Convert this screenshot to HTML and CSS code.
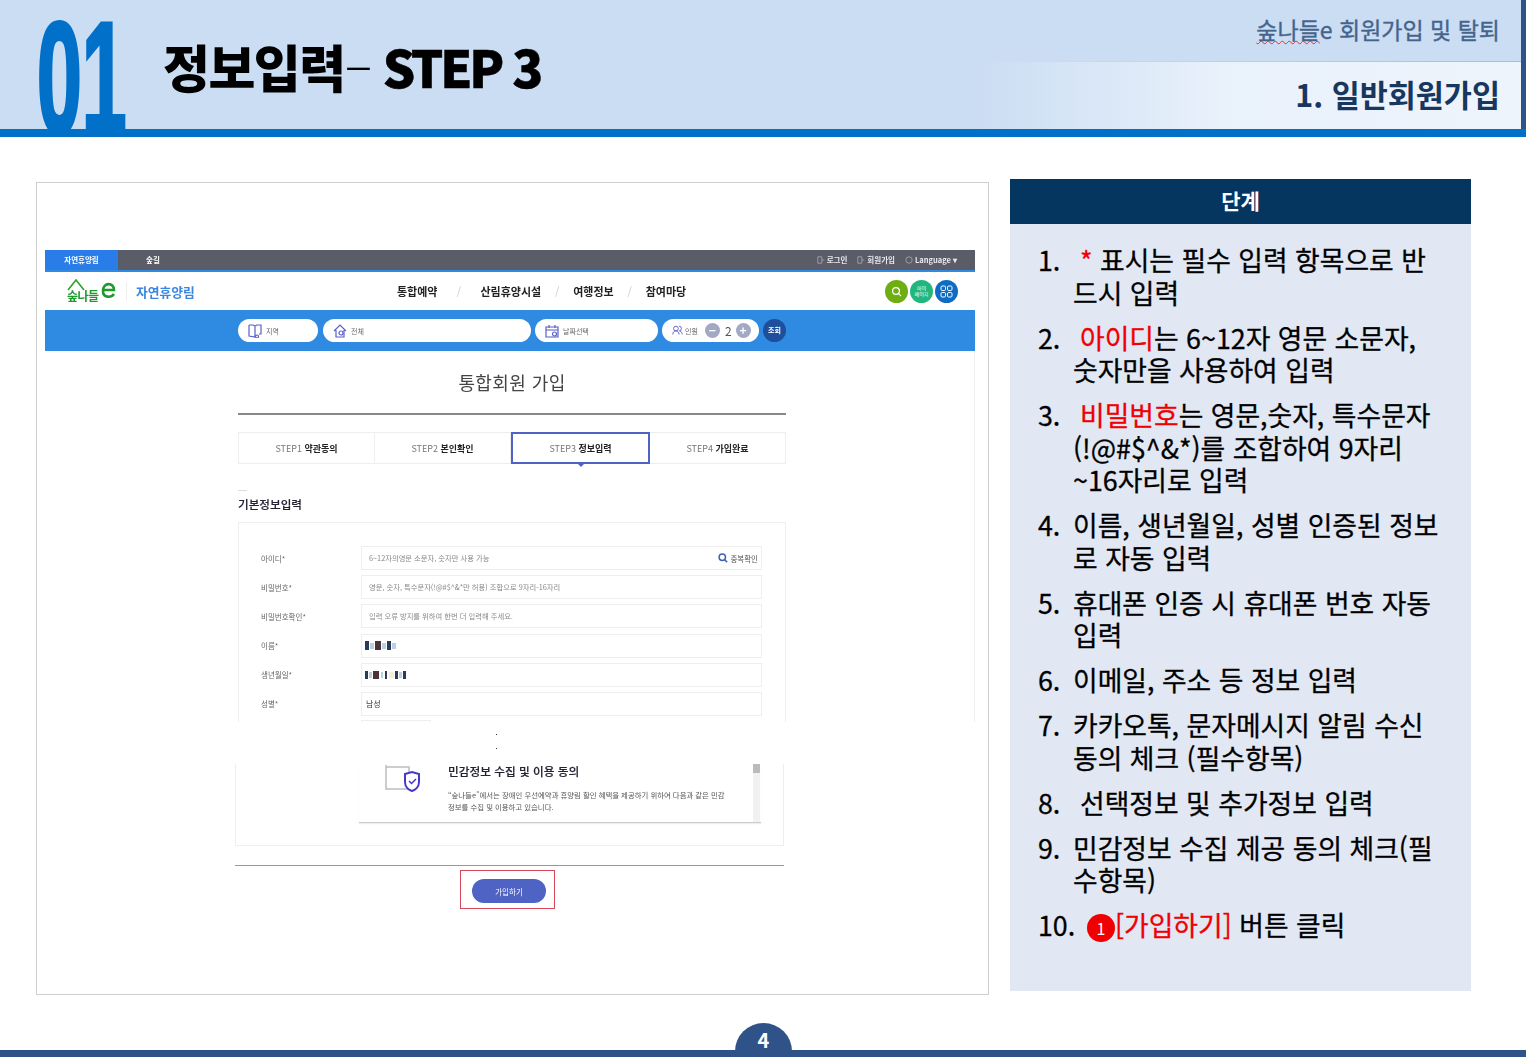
FILE: index.html
```html
<!doctype html>
<html lang="ko">
	<head>
		<meta charset="UTF-8" />
		<title>정보입력 STEP 3</title>
		<link rel="stylesheet" href="styles.css">
	</head>
	<body>
		<div class="slide">
			<header class="head">
				<div class="head-num"><span>01</span></div>
				<h1 class="head-title">정보입력<span class="dash">–</span><span class="title-en">STEP 3</span></h1>
				<div class="head-right">
					<div class="crumb"><span class="typo">숲나들</span>e 회원가입 및 탈퇴</div>
					<div class="sub">1. 일반회원가입</div>
				</div>
				<div class="head-edge"></div>
			</header>

			<main class="main">
				<section class="shot">
					<div class="page">
						<div class="topbar">
							<div class="tab">자연휴양림</div>
							<div class="tab2">숲길</div>
							<div class="top-links">
								<span><svg class="ico-door" viewBox="0 0 10 10"><path d="M1 1h5v8H1zM6 5h3" fill="none" stroke="#a9abb5"/></svg>로그인</span>
								<span><svg class="ico-door" viewBox="0 0 10 10"><path d="M1 1h5v8H1zM6 5h3" fill="none" stroke="#a9abb5"/></svg>회원가입</span>
								<span><svg class="ico-door" viewBox="0 0 10 10"><circle cx="5" cy="5" r="4" fill="none" stroke="#a9abb5"/></svg>Language ▾</span>
							</div>
						</div>
						<div class="site">
							<svg class="logo" viewBox="0 0 50 24">
								<path d="M1 11 9 1l8 10" fill="none" stroke="#2aa52a" stroke-width="1.6"/>
								<text x="0" y="22" class="logo-t">숲나들</text>
								<path d="M37 11h10c0-8-11-8-11 1 0 7 8 7 11 3" fill="none" stroke="#1f9a2e" stroke-width="2.6"/>
							</svg>
							<div class="site-name">자연휴양림</div>
							<nav class="gnb">
								<span>통합예약</span><i class="wide">/</i><span>산림휴양시설</span><i>/</i><span>여행정보</span><i>/</i><span>참여마당</span>
							</nav>
							<div class="rounds">
								<span class="round r-green"><svg width="11" height="11" viewBox="0 0 11 11"><circle cx="5" cy="5" r="3.4" fill="none" stroke="#fff" stroke-width="1.2"/><path d="m7.6 7.6 2.4 2.4" stroke="#fff" stroke-width="1.2"/></svg></span>
								<span class="round r-mint">마이<br>페이지</span>
								<span class="round r-blue"><svg width="13" height="13" viewBox="0 0 13 13" fill="none" stroke="#fff"><rect x="1" y="1" width="4.5" height="4.5" rx="1.2"/><rect x="7.5" y="1" width="4.5" height="4.5" rx="1.2"/><rect x="1" y="7.5" width="4.5" height="4.5" rx="1.2"/><rect x="7.5" y="7.5" width="4.5" height="4.5" rx="1.2"/></svg></span>
							</div>
						</div>
						<div class="search">
							<div class="pill p-area"><svg class="pico" viewBox="0 0 14 14"><path d="M1 1h4l2 1 2-1h4v9h-2M7 2v11l-6-1V1M9 11a1.5 1.5 0 1 0 .1 0" /></svg>지역</div>
							<div class="pill p-all"><svg class="pico" viewBox="0 0 14 14"><path d="M1 7 7 1l6 6M3 6v7h8V6"/><circle cx="8" cy="9" r="2"/></svg>전체</div>
							<div class="pill p-date"><svg class="pico" viewBox="0 0 14 14"><path d="M1 3h12v10H1zM4 1v3M10 1v3M1 6h12"/><circle cx="9.5" cy="10" r="2"/></svg>날짜선택</div>
							<div class="pill p-num"><svg class="pico" viewBox="0 0 14 14"><circle cx="5" cy="4.5" r="3"/><path d="M1 12c0-6 8-6 8 0M9 1.500a3 3 0 0 1 0 6M10 8c2 .5 3 2 3 4"/></svg>인원<b class="step">−</b><em>2</em><b class="step">+</b></div>
							<div class="go">조회</div>
						</div>
						<div class="content">
							<h2 class="c-title">통합회원 가입</h2>
							<ul class="steps">
								<li>STEP1 <b>약관동의</b></li>
								<li>STEP2 <b>본인확인</b></li>
								<li class="on">STEP3 <b>정보입력</b></li>
								<li>STEP4 <b>가입완료</b></li>
							</ul>
							<div class="sec-dash"></div>
							<h3 class="sec-title">기본정보입력</h3>
							<div class="form">
								<div class="row"><label>아이디*</label><div class="field">6~12자의영문 소문자, 숫자만 사용 가능<span class="dup"><svg width="10" height="10" viewBox="0 0 10 10"><circle cx="4.300" cy="4.300" r="3.200" fill="none" stroke="#3f62b5" stroke-width="1.500"/><path d="m6.600 6.600 2.600 2.600" stroke="#3f62b5" stroke-width="1.500"/></svg>중복확인</span></div></div>
								<div class="row"><label>비밀번호*</label><div class="field">영문, 숫자, 특수문자(!@#$^&amp;*만 허용) 조합으로 9자리-16자리</div></div>
								<div class="row"><label>비밀번호확인*</label><div class="field">입력 오류 방지를 위하여 한번 더 입력해 주세요.</div></div>
								<div class="row"><label>이름*</label><div class="field"><span class="mosaic m-name"><i></i><i></i><i></i><i></i><i></i><i></i></span></div></div>
								<div class="row"><label>생년월일*</label><div class="field"><span class="mosaic m-birth"><i></i><i></i><i></i><i></i><i></i><i></i><i></i><i></i><i></i></span></div></div>
								<div class="row"><label>성별*</label><div class="field val">남성</div></div>
								<div class="row-cut"></div>
							</div>
						</div>
						<div class="gap"><span></span><span></span></div>
						<div class="lower">
							<div class="agree-box">
								<div class="agree">
									<svg class="agree-ico" viewBox="0 0 36 28">
										<path d="M1 8V25H24M1 8V1M1 3H24V10" fill="none" stroke="#bdbdbd" stroke-width="1.500"/>
										<path d="M20 10 27 8l7 2v8c0 5-4 8-7 9-3-1-7-4-7-9z" fill="#fff" stroke="#4338c9" stroke-width="2"/>
										<path d="m24 17 2.500 2.500L31 15" fill="none" stroke="#4338c9" stroke-width="1.500"/>
									</svg>
									<div class="agree-text">
										<h4>민감정보 수집 및 이용 동의</h4>
										<p>“숲나들e”에서는 장애인 우선예약과 휴양림 할인 혜택을 제공하기 위하여 다음과 같은 민감<br>정보를 수집 및 이용하고 있습니다.</p>
									</div>
									<div class="scroll"><span></span></div>
								</div>
							</div>
							<div class="lower-rule"></div>
							<div class="btn-mark"><button class="join">가입하기</button></div>
						</div>
					</div>
				</section>

				<aside class="panel">
					<div class="panel-head">단계</div>
					<ol class="list">
						<li><span>1.</span><p><em class="lead">*</em> 표시는 필수 입력 항목으로 반<br>드시 입력</p></li>
						<li><span>2.</span><p><em class="lead">아이디</em>는 6~12자 영문 소문자,<br>숫자만을 사용하여 입력</p></li>
						<li><span>3.</span><p><em class="lead">비밀번호</em>는 영문,숫자, 특수문자<br>(!@#$^&amp;*)를 조합하여 9자리<br>~16자리로 입력</p></li>
						<li><span>4.</span><p>이름, 생년월일, 성별 인증된 정보<br>로 자동 입력</p></li>
						<li><span>5.</span><p>휴대폰 인증 시 휴대폰 번호 자동<br>입력</p></li>
						<li><span>6.</span><p>이메일, 주소 등 정보 입력</p></li>
						<li><span>7.</span><p>카카오톡, 문자메시지 알림 수신<br>동의 체크 (필수항목)</p></li>
						<li><span>8.</span><p class="ind">선택정보 및 추가정보 입력</p></li>
						<li><span>9.</span><p>민감정보 수집 제공 동의 체크(필<br>수항목)</p></li>
						<li class="last"><span>10.</span><b class="mark">1</b><em>[가입하기]</em>&nbsp;버튼 클릭</li>
					</ol>
				</aside>
			</main>

			<footer class="foot"><span class="page-no">4</span></footer>
		</div>
	</body>
</html>
```

FILE: styles.css
```css
* {
	box-sizing: border-box;
}
body {
	margin: 0;
	font-family: "Noto Sans CJK KR", "Noto Sans", sans-serif;
	background-color: white;
}
h1, h2, h3, h4, p, ul, ol {
	margin: 0;
	padding: 0;
	list-style: none;
}
em, i {
	font-style: normal;
}
.slide {
	position: relative;
	width: 1526px;
	height: 1057px;
	overflow: hidden;
	display: flex;
	flex-direction: column;
}

/* slide header */
.head {
	height: 137px;
	flex: none;
	display: flex;
	background-color: #cbddf3;
	border-bottom: 8px solid #0070c9;
	overflow: hidden;
}
.head-num {
	width: 163px;
	flex: none;
	overflow: hidden;
}
.head-num span {
	display: block;
	width: 176px;
	margin: -14px 0 0 37px;
	font-family: "Liberation Sans", sans-serif;
	font-size: 158px;
	line-height: 182px;
	font-weight: bold;
	color: #0070c9;
	-webkit-text-stroke: 4px #0070c9;
	transform: scaleX(0.51);
	transform-origin: left top;
}
.head-title {
	width: 817px;
	flex: none;
	padding-top: 29px;
	font-size: 51px;
	line-height: 74px;
	font-weight: 900;
	color: #000;
	letter-spacing: -1.500px;
	white-space: nowrap;
}
.dash {
	margin-right: 12px;
	font-weight: 300;
}
.title-en {
	letter-spacing: -3.200px;
	-webkit-text-stroke: 0.500px #000;
}
.head-right {
	width: 541px;
	flex: none;
	display: flex;
	flex-direction: column;
}
.crumb {
	height: 62px;
	padding: 12px 21px 0 0;
	text-align: right;
	font-size: 23px;
	line-height: 34px;
	color: #44648c;
	-webkit-text-stroke: 0.350px #44648c;
	border-bottom: 1px solid;
	border-image: linear-gradient(90deg, #cbddf3 10%, #a8bdd8 100%) 1;
}
.typo {
	text-decoration: underline wavy #d9363e 1px;
	text-underline-offset: 1px;
}
.sub {
	height: 67px;
	padding: 9px 21px 0 0;
	text-align: right;
	font-size: 30.500px;
	line-height: 46px;
	font-weight: bold;
	color: #17375e;
	background: linear-gradient(90deg, #cbddf3, #e9f1fb 45%, #eef4fc);
}
.head-edge {
	width: 5px;
	flex: none;
	background-color: #2f5288;
}

/* main area */
.main {
	flex: 1;
	display: flex;
	align-items: flex-start;
	padding: 42px 0 0 36px;
}
.shot {
	width: 953px;
	height: 813px;
	margin-top: 3px;
	padding: 67px 0 0 8px;
	border: 1px solid #cfcfcf;
}
.page {
	width: 930px;
	font-size: 8px;
	filter: blur(0.35px);
}

/* captured site: top */
.topbar {
	height: 22px;
	display: flex;
	background-color: #5a5c68;
	border-bottom: 2px solid #2f8ae2;
	color: white;
	font-size: 7.500px;
	line-height: 20px;
	font-weight: bold;
}
.tab {
	width: 73px;
	text-align: center;
	background-color: #2a7de8;
}
.tab2 {
	width: 70px;
	text-align: center;
}
.top-links {
	margin-left: auto;
	padding-right: 18px;
	display: flex;
	gap: 10px;
	color: #e8e8ee;
}
.ico-door {
	width: 8px;
	height: 8px;
	margin-right: 2px;
	vertical-align: -1px;
}
.site {
	height: 38px;
	display: flex;
	align-items: center;
	padding-left: 22px;
}
.logo {
	width: 50px;
	height: 24px;
	flex: none;
}
.logo-t {
	font-size: 12px;
	font-weight: bold;
	fill: #1f9a2e;
	letter-spacing: -0.500px;
}
.site-name {
	width: 271px;
	flex: none;
	margin-left: 9px;
	padding-left: 9px;
	border-left: 1px solid #eee;
	font-size: 12.800px;
	font-weight: bold;
	color: #3b86e0;
}
.gnb {
	display: flex;
	width: 488px;
	flex: none;
	font-size: 11px;
	font-weight: bold;
	color: #222;
}
.gnb i {
	width: 32px;
	text-align: center;
	font-weight: normal;
	color: #ccc;
}
.gnb i.wide {
	width: 43px;
}
.rounds {
	display: flex;
	gap: 2px;
}
.round {
	width: 23px;
	height: 23px;
	border-radius: 50%;
	display: flex;
	align-items: center;
	justify-content: center;
	text-align: center;
	color: white;
	font-size: 5px;
	line-height: 6px;
}
.r-green {
	background-color: #6fae12;
}
.r-mint {
	background-color: #1fb77c;
}
.r-blue {
	background-color: #0f6cc0;
}
.search {
	height: 41px;
	display: flex;
	align-items: center;
	gap: 4px;
	padding-left: 193px;
	background-color: #2f8ae2;
}
.pill {
	height: 23px;
	display: flex;
	align-items: center;
	padding-left: 10px;
	border-radius: 12px;
	background-color: white;
	font-size: 7px;
	color: #666;
}
.pico {
	width: 14px;
	height: 14px;
	margin-right: 4px;
	fill: none;
	stroke: #5a5fc8;
	stroke-width: 1.200;
}
.p-area {
	width: 80px;
	margin-right: 1px;
}
.p-all {
	width: 208px;
}
.p-date {
	width: 123px;
}
.p-num {
	width: 97px;
}
.p-num .pico {
	width: 11px;
	height: 11px;
	margin-right: 2px;
}
.step {
	width: 15px;
	height: 15px;
	margin-left: 7px;
	border-radius: 50%;
	background-color: #a3a9c4;
	color: white;
	font-size: 12px;
	line-height: 14px;
	text-align: center;
}
.p-num em {
	margin-left: 5px;
	font-size: 12px;
	color: #555;
}
.p-num em + .step {
	margin-left: 4px;
}
.go {
	width: 23px;
	height: 23px;
	border-radius: 50%;
	background-color: #1d4f9c;
	color: white;
	font-size: 7px;
	font-weight: bold;
	line-height: 23px;
	text-align: center;
}

/* captured site: form */
.content {
	height: 371px;
	padding-left: 193px;
	padding-right: 188px;
	border-right: 1px solid #eee;
	overflow: hidden;
}
.c-title {
	height: 64px;
	padding-top: 16px;
	border-bottom: 2px solid #888;
	text-align: center;
	font-size: 18px;
	line-height: 30px;
	font-weight: normal;
	letter-spacing: 0.400px;
	color: #444;
}
.steps {
	display: flex;
	height: 32px;
	margin-top: 17px;
	border: 1px solid #eee;
}
.steps li {
	position: relative;
	flex: 1;
	border-right: 1px solid #eee;
	text-align: center;
	font-size: 9px;
	line-height: 32px;
	color: #777;
}
.steps b {
	color: #222;
}
.steps li.on {
	margin: -1px 0;
	height: 32px;
	border: 2px solid #4f63c4;
	line-height: 30px;
}
.steps li.on::after {
	content: "";
	position: absolute;
	left: 65px;
	top: 30px;
	border: 3px solid transparent;
	border-top-color: #4f63c4;
}
.steps li:last-child {
	border-right: none;
}
.sec-dash {
	width: 9px;
	height: 1px;
	margin-top: 26px;
	background-color: #ddd;
}
.sec-title {
	margin-top: 2px;
	font-size: 11.600px;
	line-height: 22px;
	font-weight: 500;
	color: #223;
	-webkit-text-stroke: 0.150px #223;
}
.form {
	height: 200px;
	margin-top: 7px;
	padding: 23px 23px 0 22px;
	border: 1px solid #eee;
	border-bottom: none;
}
.row {
	display: flex;
	align-items: center;
	height: 24px;
	margin-bottom: 5.200px;
}
.row label {
	width: 100px;
	flex: none;
	font-size: 7.500px;
	color: #666;
}
.field {
	flex: 1;
	height: 24px;
	display: flex;
	align-items: center;
	padding-left: 7px;
	border: 1px solid #eee;
	font-size: 7.300px;
	color: #888;
}
.val {
	padding-left: 4px;
	font-size: 8px;
	color: #333;
}
.dup {
	margin-left: auto;
	padding-right: 3px;
	display: flex;
	align-items: center;
	gap: 2px;
	font-size: 7.500px;
	color: #555;
}
.mosaic {
	display: flex;
	align-items: center;
	gap: 1px;
	margin-left: -4px;
}
.mosaic i {
	display: block;
	width: 4px;
	height: 9px;
	background-color: #2a3b55;
}
.mosaic i:nth-child(even) {
	background-color: #bcd0e4;
	height: 6px;
}
.mosaic i:nth-child(3) {
	width: 6px;
	background-color: #4a3438;
}
.m-birth {
	gap: 1.500px;
}
.m-birth i {
	width: 2.500px;
	height: 8px;
}
.m-birth i:nth-child(6) {
	width: 5px;
	background-color: #f4efd6;
}
.row-cut {
	width: 70px;
	height: 3px;
	margin: -1px 0 0 100px;
	border: 1px solid #eee;
	border-bottom: none;
}

.gap {
	height: 42px;
	padding: 12px 0 0 451px;
}
.gap span {
	display: block;
	width: 1px;
	height: 1px;
	margin-bottom: 13px;
	background-color: #333;
}
.lower {
	padding-left: 190px;
}
.agree-box {
	width: 549px;
	height: 82px;
	padding-left: 123px;
	border: 1px solid #eee;
	border-top: none;
}
.agree {
	width: 402px;
	height: 59px;
	display: flex;
	border-bottom: 1px solid #ccc;
	box-shadow: 0 1px 1px #eee;
}
.agree-ico {
	width: 36px;
	height: 28px;
	flex: none;
	margin-left: 26px;
}
.agree-text {
	width: 304px;
	flex: none;
	margin-left: 27px;
}
.agree-text h4 {
	font-size: 11.700px;
	line-height: 14px;
	font-weight: 500;
	color: #223;
	-webkit-text-stroke: 0.150px #223;
}
.agree-text p {
	margin-top: 11px;
	font-size: 7.400px;
	line-height: 12px;
	color: #555;
	white-space: nowrap;
}
.scroll {
	width: 7px;
	height: 58px;
	margin-left: 1px;
	background-color: #f1f1f1;
}
.scroll span {
	display: block;
	height: 9px;
	background-color: #bbb;
}
.lower-rule {
	width: 549px;
	height: 1px;
	margin-top: 19px;
	background-color: #999;
}
.btn-mark {
	width: 95px;
	height: 39px;
	margin: 4px 0 0 225px;
	padding: 8px 0 0 11px;
	border: 1.500px solid #d8485a;
}
.join {
	display: block;
	width: 74px;
	height: 24px;
	padding: 0;
	border: none;
	border-radius: 12px;
	background-color: #4f63c4;
	color: white;
	font-family: inherit;
	font-size: 7.500px;
}

/* right panel */
.panel {
	width: 461px;
	height: 812px;
	margin-left: 21px;
	background-color: #e1e7f3;
}
.panel-head {
	height: 45px;
	background-color: #04365f;
	color: white;
	text-align: center;
	font-size: 21px;
	line-height: 42px;
	font-weight: bold;
}
.list {
	padding: 20px 0 0 28px;
	font-size: 26.800px;
	line-height: 32.500px;
	color: #000;
	-webkit-text-stroke: 0.300px #000;
}
.list li {
	display: flex;
	margin-bottom: 12.500px;
	white-space: nowrap;
}
.list li > span {
	width: 35px;
	flex: none;
}
.lead, .list em {
	color: #f00000;
	-webkit-text-stroke: 0.300px #f00000;
}
.lead {
	margin-left: 7px;
}
.ind {
	padding-left: 7px;
}
.list .last > span {
	width: 49px;
}
.mark {
	width: 28px;
	height: 28px;
	flex: none;
	margin-top: 5px;
	border-radius: 50%;
	background-color: #f00000;
	color: white;
	-webkit-text-stroke: 0;
	font-size: 16px;
	font-weight: normal;
	line-height: 28px;
	text-align: center;
}

/* footer */
.foot {
	height: 7px;
	margin-top: auto;
	flex: none;
	background-color: #2f5288;
}
.page-no {
	position: absolute;
	left: 735px;
	top: 1023px;
	width: 57px;
	height: 57px;
	border-radius: 50%;
	background-color: #2f5288;
	color: white;
	text-align: center;
	font-size: 20px;
	line-height: 34px;
	font-weight: bold;
}
```
